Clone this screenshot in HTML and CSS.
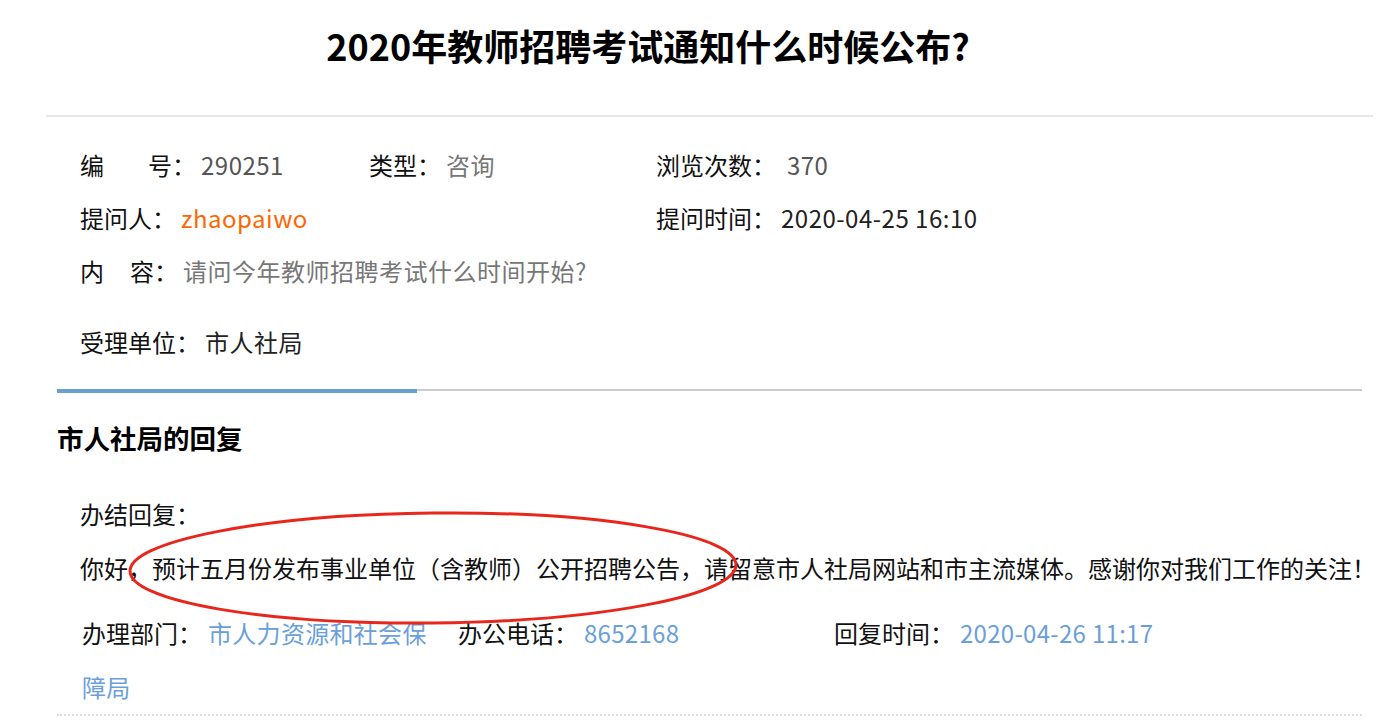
FILE: index.html
```html
<!DOCTYPE html>
<html lang="zh-CN">
    <head>
        <meta charset="UTF-8" />
        <meta name="viewport" content="width=device-width, initial-scale=1.0" />
        <link rel="stylesheet" href="styles.css">
        <title>2020年教师招聘考试通知什么时候公布？</title>
    </head>
    <body>
        <main class="page">
            <header class="ask-header">
                <h1 class="ask-title">2020年教师招聘考试通知什么时候公布?</h1>
            </header>

            <section class="ask-info">
                <div class="info-item"><span class="label">编<i class="gap-lg"></i>号：</span><span class="val val-dark">290251</span></div>
                <div class="info-item"><span class="label">类型：</span><span class="val val-gray">咨询</span></div>
                <div class="info-item"><span class="label">浏览次数：</span><span class="val val-dark">&nbsp;370</span></div>

                <div class="info-item span-2"><span class="label">提问人：</span><span class="val val-orange">zhaopaiwo</span></div>
                <div class="info-item"><span class="label">提问时间：</span><span class="val val-black">2020-04-25 16:10</span></div>

                <div class="info-item span-all"><span class="label">内<i class="gap-sm"></i>容：</span><span class="val val-gray">请问今年教师招聘考试什么时间开始?</span></div>

                <div class="info-item span-all unit"><span class="label">受理单位：</span><span class="val val-black">市人社局</span></div>
            </section>

            <section class="reply">
                <div class="tab-bar">
                    <span class="tab-active"></span>
                    <span class="tab-rest"></span>
                </div>
                <h2 class="reply-title">市人社局的回复</h2>

                <div class="reply-body">
                    <p class="reply-label">办结回复：</p>
                    <p class="reply-text">你好，预计五月份发布事业单位（含教师）公开招聘公告，请留意市人社局网站和市主流媒体。感谢你对我们工作的关注！</p>

                    <div class="reply-meta">
                        <div class="meta-cell"><span class="label">办理部门：</span><span class="meta-val">市人力资源和社会保障局</span></div>
                        <div class="meta-cell"><span class="label">办公电话：</span><span class="meta-val">8652168</span></div>
                        <div class="meta-cell"><span class="label">回复时间：</span><span class="meta-val">2020-04-26 11:17</span></div>
                    </div>
                </div>

                <!-- red hand-drawn mark over the reply -->
                <svg class="mark" width="614" height="118" viewBox="0 0 614 118">
                    <ellipse cx="307" cy="59" rx="303" ry="55" fill="none" stroke="#e8261c" stroke-width="3" transform="rotate(-0.6 307 59)" />
                </svg>
            </section>
        </main>
    </body>
</html>
```

FILE: styles.css
```css
* {
    margin: 0;
    padding: 0;
    box-sizing: border-box;
}
:root {
    --text: #111;
    --dark: #555;
    --gray: #777;
    --orange: #ff6600;
    --blue: #6a9fdb;
    --font-fam: 'Noto Sans CJK SC', 'Noto Sans', sans-serif;
}
body {
    background-color: #fff;
    color: var(--text);
    font-family: var(--font-fam);
    font-size: 24px;
}

.page {
    margin: 0 25px 0 46px;
}

/* ======= header ======= */
.ask-header {
    padding: 20px 123px 45px 0;
    border-bottom: 2px solid #e8e8e8;
}
.ask-title {
    text-align: center;
    font-size: 36px;
    line-height: 50px;
    font-weight: 700;
    color: #000;
}

/* ======= info ======= */
.ask-info {
    display: grid;
    grid-template-columns: 289px 287px 1fr;
    padding: 21px 0 0 34px;
    line-height: 53px;
}
.info-item {
    white-space: nowrap;
}
.span-2 {
    grid-column: 1 / 3;
}
.span-all {
    grid-column: 1 / -1;
}
.unit {
    margin-top: 18px;
}
.label {
    color: var(--text);
}
.gap-lg,
.gap-sm {
    display: inline-block;
}
.gap-lg {
    width: 44px;
}
.gap-sm {
    width: 26px;
}
.val {
    margin-left: 5px;
    letter-spacing: 0.5px;
}
.val-dark {
    color: var(--dark);
}
.val-gray {
    color: var(--gray);
}
.val-orange {
    color: var(--orange);
}
.val-black {
    color: #222;
}

/* ======= reply ======= */
.reply {
    position: relative;
    margin: 21px 11px 0;
    border-bottom: 2px dotted #dcdcdc;
}
.tab-bar {
    display: flex;
    align-items: flex-start;
    height: 4px;
}
.tab-active {
    width: 360px;
    height: 4px;
    background-color: #6a9fd5;
}
.tab-rest {
    flex: 1;
    height: 2px;
    background-color: #cccccc;
}
.reply-title {
    margin-top: 18px;
    font-size: 26.5px;
    line-height: 54px;
    font-weight: 700;
    color: #000;
}
.reply-body {
    padding-left: 23px;
    line-height: 54px;
}
.reply-label {
    margin-top: 22px;
}
.reply-text {
    white-space: nowrap;
}
.reply-meta {
    display: flex;
    margin-top: 11px;
    padding-left: 2px;
}
.meta-cell {
    width: 376px;
    padding-right: 22px;
}
.meta-val {
    margin-left: 6px;
    color: var(--blue);
    letter-spacing: 0.3px;
}

.mark {
    position: absolute;
    left: 69px;
    top: 120px;
    pointer-events: none;
}
```
